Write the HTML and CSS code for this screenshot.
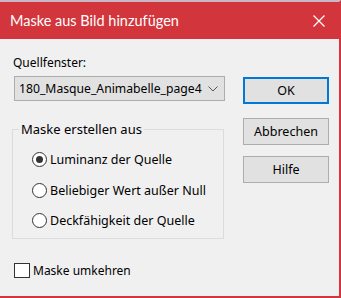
FILE: index.html
```html
<!DOCTYPE html>
<html lang="de">
<head>
<meta charset="utf-8">
<title>Maske aus Bild hinzufügen</title>
<link rel="stylesheet" href="styles.css">
</head>
<body>
<div class="window">
  <div class="titlebar">
    <span class="title">Maske aus Bild hinzufügen</span>
    <svg class="close" width="12" height="12" viewBox="0 0 12 12"><path d="M0.5 0.5 L11.5 11.5 M11.5 0.5 L0.5 11.5" stroke="#fff" stroke-width="1.2" fill="none"/></svg>
  </div>
  <div class="body">
    <div class="main">
      <div class="left">
        <div class="label">Quellfenster:</div>
        <div class="select">
          <span class="select-text">180_Masque_Animabelle_page4</span>
          <svg class="chev" width="10" height="6" viewBox="0 0 10 6"><path d="M0.5 0.5 L5 5 L9.5 0.5" stroke="#555" stroke-width="1" fill="none"/></svg>
        </div>
        <fieldset class="group">
          <legend>Maske erstellen aus</legend>
          <div class="radio r1"><span class="circle checked"></span><span>Luminanz der Quelle</span></div>
          <div class="radio r2"><span class="circle"></span><span>Beliebiger Wert außer Null</span></div>
          <div class="radio"><span class="circle"></span><span>Deckfähigkeit der Quelle</span></div>
        </fieldset>
      </div>
      <div class="buttons">
        <div class="btn default">OK</div>
        <div class="btn cancel">Abbrechen</div>
        <div class="btn help">Hilfe</div>
      </div>
    </div>
    <div class="check"><span class="box"></span><span>Maske umkehren</span></div>
  </div>
</div>
</body>
</html>
```
FILE: styles.css
```css
html, body {
  margin: 0;
  padding: 0;
}
body {
  width: 341px;
  height: 298px;
  overflow: hidden;
  font-family: "Noto Sans", "Open Sans", sans-serif;
  font-size: 12px;
  color: #000;
}
.window {
  width: 341px;
  height: 298px;
  box-sizing: border-box;
  border-top: 2px solid #c9b7c6;
  border-right: 2px solid #d2353b;
  border-bottom: 2px solid #d2353b;
  background: #f0f0f0;
  display: flex;
  flex-direction: column;
}
.titlebar {
  height: 37px;
  background: #d2353b;
  display: flex;
  align-items: center;
  justify-content: space-between;
  padding: 0 14px 0 10px;
  color: #fff;
  flex-shrink: 0;
}
.title {
  font-family: Lato, "Noto Sans", sans-serif;
  font-size: 14.5px;
  margin-top: -1px;
}
.close {
  display: block;
  margin-top: 1px;
}
.body {
  flex: 1;
  display: flex;
  flex-direction: column;
  padding: 17px 0 0 13px;
}
.main {
  display: flex;
}
.left {
  width: 212px;
}
.label {
  height: 20px;
  line-height: 14px;
}
.select {
  margin-left: 1px;
  width: 211px;
  height: 25px;
  box-sizing: border-box;
  border: 1px solid #adadad;
  background: #e1e1e1;
  display: flex;
  align-items: center;
  justify-content: space-between;
  padding: 0 6px 0 4px;
  font-size: 12.2px;
}
.select-text {
  line-height: 14px;
}
.chev {
  display: block;
}
.group {
  margin: 21px 0 0 -1px;
  width: 212px;
  height: 117px;
  box-sizing: border-box;
  border: 1px solid #dcdcdc;
  padding: 15px 0 0 19px;
  font-size: 12.5px;
}
.group legend {
  padding: 0 2px;
  margin-left: -13px;
  line-height: 14px;
  font-size: 13px;
}
.radio {
  display: flex;
  align-items: center;
  height: 16px;
}
.radio.r1 {
  margin-bottom: 15px;
}
.radio.r2 {
  margin-bottom: 14px;
}
.circle {
  width: 15px;
  height: 15px;
  box-sizing: border-box;
  border: 1px solid #333;
  border-radius: 50%;
  background: #fff;
  margin-right: 3px;
  position: relative;
}
.circle.checked::after {
  content: "";
  position: absolute;
  left: 3px;
  top: 3px;
  width: 7px;
  height: 7px;
  border-radius: 50%;
  background: #333;
}
.buttons {
  margin-left: 18px;
  margin-top: 21px;
  display: flex;
  flex-direction: column;
  font-size: 12.5px;
}
.btn {
  width: 86px;
  height: 27px;
  box-sizing: border-box;
  border: 1px solid #adadad;
  background: #e1e1e1;
  display: flex;
  align-items: center;
  justify-content: center;
}
.btn.default {
  border: 2px solid #0078d7;
}
.btn.cancel {
  margin-top: 14px;
}
.btn.help {
  margin-top: 11px;
}
.check {
  margin-top: 23px;
  margin-left: 1px;
  display: flex;
  align-items: center;
  height: 16px;
}
.box {
  width: 16px;
  height: 15px;
  box-sizing: border-box;
  border: 1px solid #333;
  background: #fff;
  margin-right: 3px;
}
```
